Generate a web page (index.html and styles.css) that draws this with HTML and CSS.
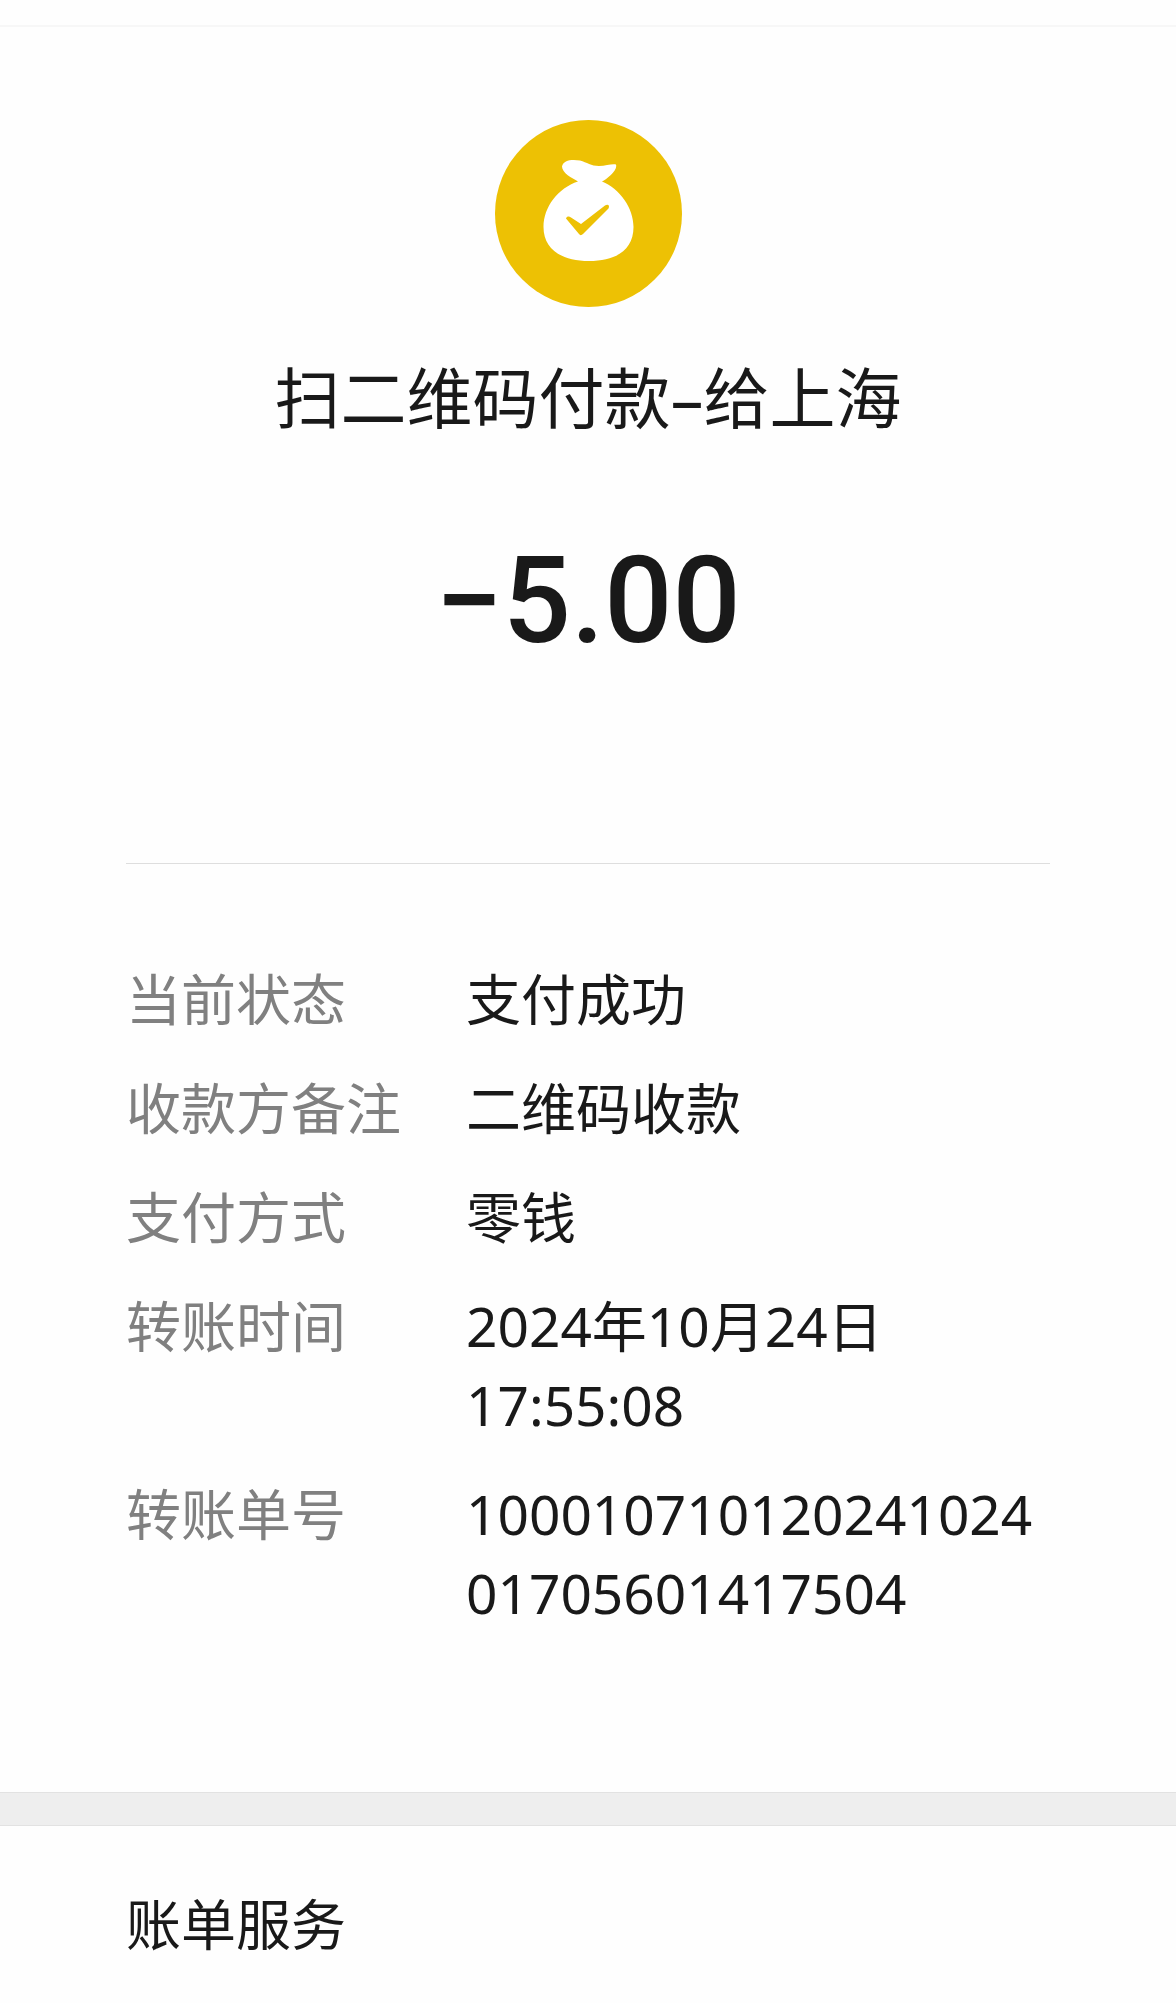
FILE: index.html
```
<!DOCTYPE html>
<html lang="zh-CN">
<head>
  <meta charset="UTF-8">
  <meta name="viewport" content="width=device-width, initial-scale=1.0">
  <title>账单详情</title>
  <link rel="stylesheet" href="styles.css">
</head>
<body>
  <main>
    <section class="bill">
      <header class="summary">
        <svg class="bill-icon" viewBox="0 0 187 187" aria-hidden="true">
          <circle cx="93.5" cy="93.5" r="93.5" fill="#edc104"/>
          <!-- money bag -->
          <path fill="#fff" d="M83 61.500C77 58 67 53 67 46.500C68 40 77 39 85 40.500C92 42.500 96 46 104 46C111 46 117 43.500 121 44.500C123 50 112 59 107 61.500C125 69 138.500 88 138.500 107C138.500 130 121 141 94 141C66 141 48.500 129 48.500 107C48.500 87 63 68 83 61.500Z"/>
          <path fill="#edc104" d="M71 98.500C72 96 74 96 76 97.500L86 104L110 85.500C113 83.500 115 85.500 113.500 88.500L88 114C86.500 115.500 85 115.500 84 114Z"/>
        </svg>
        <h1>扫二维码付款–给上海</h1>
        <p class="amount">−5.00</p>
      </header>
      <dl class="details">
        <dt>当前状态</dt>
        <dd>支付成功</dd>
        <dt>收款方备注</dt>
        <dd>二维码收款</dd>
        <dt>支付方式</dt>
        <dd>零钱</dd>
        <dt>转账时间</dt>
        <dd>2024年10月24日 17:55:08</dd>
        <dt>转账单号</dt>
        <dd>10001071012024102401705601417504</dd>
      </dl>
    </section>
    <section class="services">
      <h2>账单服务</h2>
    </section>
  </main>
</body>
</html>
```
FILE: styles.css
```
body {
  margin: 0;
  padding-top: 25px;
  background-color: #fefefe;
  color: #191919;
  font-family: "Noto Sans", "Noto Sans CJK SC", sans-serif;
}
.bill {
  padding: 93px 126px 160px;
  border-top: 2px solid #f7f7f7;
}
.summary {
  display: flex;
  flex-direction: column;
  align-items: center;
  padding-bottom: 182px;
  border-bottom: 1px solid #dedede;
}
.bill-icon {
  width: 187px;
  height: 187px;
}
h1 {
  margin: 50px 0 0;
  font-size: 66px;
  font-weight: 400;
  line-height: 80px;
}
.amount {
  margin: 84px 0 0;
  font-family: Roboto, sans-serif;
  font-size: 120px;
  font-weight: 500;
  line-height: 160px;
}
.details {
  display: grid;
  grid-template-columns: 310px 1fr;
  row-gap: 30px;
  column-gap: 30px;
  margin: 95px 0 0;
  font-size: 55px;
  line-height: 79px;
}
.details dt {
  color: #808080;
}
.details dd {
  margin: 0;
  overflow-wrap: anywhere;
}
.services {
  padding: 58px 126px 36px;
}
/* grey band between the two sections */
.services::before {
  content: "";
  display: block;
  height: 32px;
  margin: -58px -126px 58px;
  background-color: #eee;
  border-top: 1px solid #e2e2e2;
  border-bottom: 1px solid #e2e2e2;
}
h2 {
  margin: 0;
  font-size: 55px;
  font-weight: 400;
  line-height: 79px;
}
```
